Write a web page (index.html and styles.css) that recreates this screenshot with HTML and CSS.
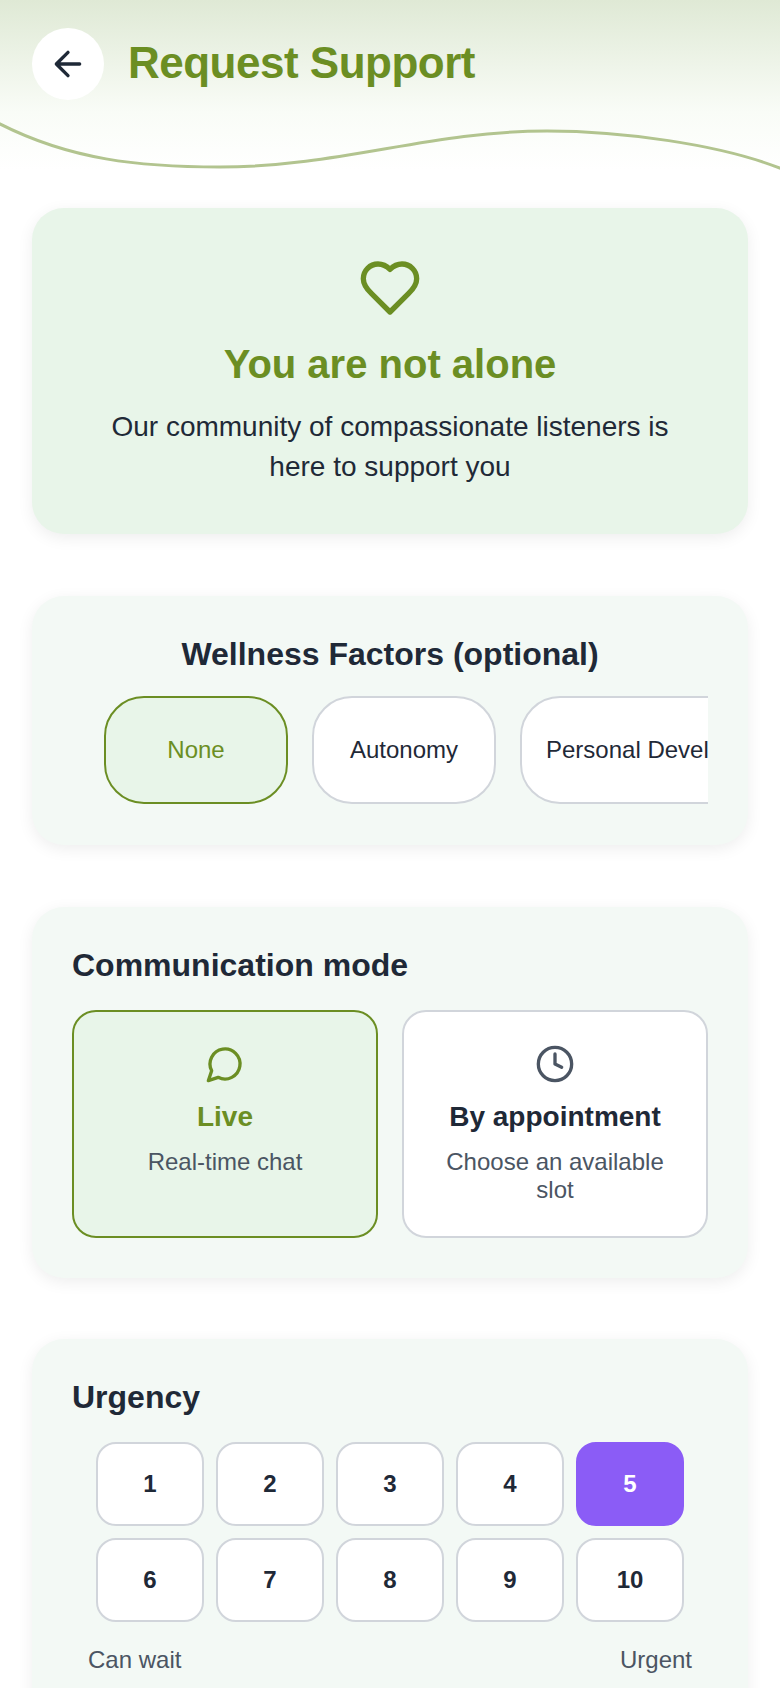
FILE: index.html
```html
<!DOCTYPE html>
<html lang="en">
<head>
  <meta charset="UTF-8" />
  <meta name="viewport" content="width=device-width, initial-scale=1.0" />
  <title>Request Support</title>
  <link rel="stylesheet" href="styles.css">
</head>
<body>
  <header class="top-bar">
    <svg class="top-wave" viewBox="0 0 780 60" preserveAspectRatio="none">
      <path d="M-2 1 C70 38 140 45 220 45 C340 45 430 9 547 9 C620 9 720 22 782 47" />
    </svg>
    <button class="back-btn">
      <svg class="icon-back" viewBox="0 0 24 24"><path d="M19 12H5M12 19l-7-7 7-7" /></svg>
    </button>
    <h1 class="page-title">Request Support</h1>
  </header>

  <main class="content">
    <section class="card card-hero">
      <svg class="icon-heart" viewBox="0 0 24 24"><path d="M19 14c1.49-1.46 3-3.21 3-5.5A5.5 5.5 0 0 0 16.5 3c-1.76 0-3 .5-4.5 2-1.5-1.5-2.74-2-4.5-2A5.5 5.5 0 0 0 2 8.5c0 2.3 1.5 4.05 3 5.5l7 7Z" /></svg>
      <h2 class="hero-title">You are not alone</h2>
      <p class="hero-text">Our community of compassionate listeners is here to support you</p>
    </section>

    <section class="card card-factors">
      <h3 class="card-title card-title-center">Wellness Factors (optional)</h3>
      <div class="chip-row">
        <button class="chip chip-active">None</button>
        <button class="chip">Autonomy</button>
        <button class="chip">Personal Development</button>
      </div>
    </section>

    <section class="card card-mode">
      <h3 class="card-title">Communication mode</h3>
      <div class="mode-grid">
        <div class="mode mode-active">
          <svg class="icon-mode" viewBox="0 0 24 24"><path d="M7.9 20A9 9 0 1 0 4 16.1L2 22Z" /></svg>
          <div class="mode-name">Live</div>
          <div class="mode-sub">Real-time chat</div>
        </div>
        <div class="mode">
          <svg class="icon-mode" viewBox="0 0 24 24"><circle cx="12" cy="12" r="10" /><path d="M12 6v6l4 2" /></svg>
          <div class="mode-name">By appointment</div>
          <div class="mode-sub">Choose an available slot</div>
        </div>
      </div>
    </section>

    <section class="card card-last">
      <h3 class="card-title">Urgency</h3>
      <div class="urgency-grid">
        <button class="level">1</button>
        <button class="level">2</button>
        <button class="level">3</button>
        <button class="level">4</button>
        <button class="level level-active">5</button>
        <button class="level">6</button>
        <button class="level">7</button>
        <button class="level">8</button>
        <button class="level">9</button>
        <button class="level">10</button>
      </div>
      <div class="urgency-labels">
        <span>Can wait</span>
        <span>Urgent</span>
      </div>
    </section>
  </main>
</body>
</html>
```

FILE: styles.css
```css
html, body {
  height: 1688px;
  overflow: hidden;
}
body {
  margin: 0;
  background: #fff;
  color: #1f2937;
  font-family: "Liberation Sans", Arial, sans-serif;
}
button {
  font-family: inherit;
  padding: 0;
}
svg {
  fill: none;
  stroke-linecap: round;
  stroke-linejoin: round;
}

.top-bar {
  position: relative;
  display: flex;
  align-items: center;
  gap: 24px;
  height: 128px;
  padding: 0 32px;
  box-sizing: border-box;
  margin-bottom: 80px;
}
.top-bar::before {
  content: "";
  position: absolute;
  left: 0;
  right: 0;
  top: 0;
  height: 170px;
  background: linear-gradient(#dfe9d5, #f9fcf7 112px, #fff);
}
.top-wave {
  position: absolute;
  left: 0;
  top: 122px;
  width: 780px;
  height: 60px;
}
.top-wave path {
  stroke: #b2c48f;
  stroke-width: 3;
}
.back-btn {
  position: relative;
  display: flex;
  align-items: center;
  justify-content: center;
  width: 72px;
  height: 72px;
  border: 0;
  border-radius: 50%;
  background: #fff;
}
.icon-back {
  width: 40px;
  height: 40px;
  stroke: #1f2937;
  stroke-width: 2;
}
.page-title {
  position: relative;
  margin: 0 0 2px;
  font-size: 44px;
  letter-spacing: -0.5px;
  color: #6b8e23;
}

.content {
  padding: 0 32px;
}
.card {
  margin-bottom: 62px;
  padding: 40px;
  border-radius: 32px;
  background: #f3f9f5;
  box-shadow: 0 4px 16px rgba(0, 0, 0, 0.07);
}
.card-hero {
  padding: 48px 72px 47px;
  text-align: center;
  background: #e8f5e9;
}
.icon-heart {
  display: block;
  width: 64px;
  height: 64px;
  margin: 0 auto 22px;
  stroke: #6b8e23;
  stroke-width: 2;
}
.hero-title {
  margin: 0 0 20px;
  font-size: 40px;
  color: #6b8e23;
}
.hero-text {
  margin: 0;
  font-size: 28px;
  line-height: 40px;
}

.card-title {
  margin: 0 0 26px;
  font-size: 32px;
}
.card-title-center {
  margin-bottom: 23px;
  text-align: center;
}
.card-factors {
  padding-bottom: 41px;
}
.card-mode {
  margin-bottom: 61px;
}
.chip-row {
  display: flex;
  gap: 24px;
  padding-left: 32px;
  overflow: hidden;
}
.chip {
  flex: none;
  box-sizing: border-box;
  min-width: 184px;
  height: 108px;
  padding: 0 24px;
  border: 2px solid #d1d5db;
  border-radius: 40px;
  background: #fff;
  color: #1f2937;
  font-size: 24px;
  white-space: nowrap;
}
.chip-active {
  border-color: #6b8e23;
  background: #e8f5e9;
  color: #6b8e23;
}

.mode-grid {
  display: grid;
  grid-template-columns: 1fr 1fr;
  gap: 24px;
}
.mode {
  padding: 32px;
  border: 2px solid #d1d5db;
  border-radius: 24px;
  background: #fff;
  text-align: center;
}
.icon-mode {
  display: block;
  width: 40px;
  height: 40px;
  margin: 0 auto 17px;
  stroke: #4b5563;
  stroke-width: 2;
}
.mode-name {
  margin-bottom: 15px;
  font-size: 28px;
  font-weight: bold;
}
.mode-sub {
  font-size: 24px;
  line-height: 28px;
  color: #4b5563;
}
.mode-active {
  border-color: #6b8e23;
  background: #e8f5e9;
}
.mode-active .icon-mode {
  stroke: #6b8e23;
}
.mode-active .mode-name {
  color: #6b8e23;
}

.card-last {
  margin-bottom: 0;
  padding-bottom: 120px;
}
.urgency-grid {
  display: flex;
  flex-wrap: wrap;
  justify-content: center;
  gap: 12px;
}
.level {
  box-sizing: border-box;
  width: 108px;
  height: 84px;
  border: 2px solid #d1d5db;
  border-radius: 20px;
  background: #fff;
  color: #1f2937;
  font-size: 24px;
  font-weight: bold;
}
.level-active {
  border-color: #8b5cf6;
  background: #8b5cf6;
  color: #fff;
}
.urgency-labels {
  display: flex;
  justify-content: space-between;
  margin-top: 24px;
  padding: 0 16px;
  font-size: 24px;
  color: #4b5563;
}
```
